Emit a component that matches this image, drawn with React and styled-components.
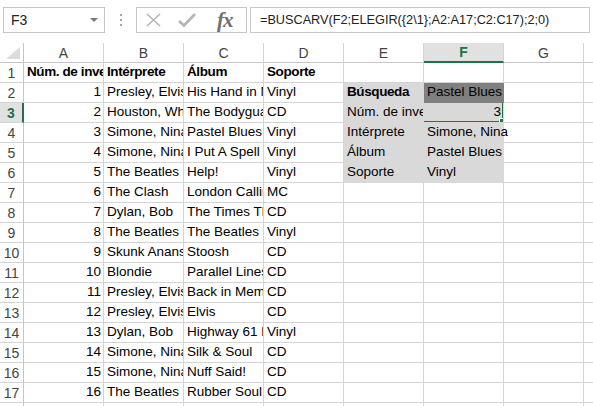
import React from 'react';
import styled, { createGlobalStyle } from 'styled-components';

const GlobalStyle = createGlobalStyle`
    html, body {
        margin:0;
        padding:0;
        background:#fff;
        font-family:"Liberation Sans", Arial, sans-serif;
    }
`;

const GRID = '#d4d4d4';
const GREEN = '#217346';
const FILL = '#d9d9d9';
const DARK = '#808080';

const Page = styled.div`
    width:593px;
    height:406px;
    overflow:hidden;
    display:flex;
    flex-direction:column;
`;

const Toolbar = styled.div`
    height:43px;
    flex-shrink:0;
    box-sizing:border-box;
    padding:7px 3px 0 3px;
    display:flex;
    align-items:flex-start;
`;

const NameBox = styled.div`
    width:102px;
    height:26px;
    box-sizing:border-box;
    border:1px solid #c6c6c6;
    display:flex;
    align-items:center;
    justify-content:space-between;
    padding:0 6px 0 7px;
    font-size:14px;
    color:#222;
`;

const Arrow = styled.span`
    width:0;
    height:0;
    border-left:4px solid transparent;
    border-right:4px solid transparent;
    border-top:4px solid #7a7a7a;
`;

const Dots = styled.div`
    width:31px;
    height:26px;
    display:flex;
    flex-direction:column;
    align-items:center;
    justify-content:center;
    gap:3px;
    span{
        width:2px;
        height:2px;
        background:#a6a6a6;
    }
`;

const Buttons = styled.div`
    width:111px;
    height:26px;
    box-sizing:border-box;
    border:1px solid #c6c6c6;
    display:flex;
    align-items:center;
    padding:0 0 0 9px;
    gap:17px;
`;

const Fx = styled.span`
    font-family:"Liberation Serif", "Times New Roman", serif;
    font-style:italic;
    font-weight:bold;
    font-size:21px;
    color:#6e6e6e;
    letter-spacing:-1px;
    margin-left:4px;
    line-height:22px;
`;

const Formula = styled.div`
    flex:1;
    margin-left:3px;
    height:26px;
    box-sizing:border-box;
    border:1px solid #c6c6c6;
    display:flex;
    align-items:center;
    padding-left:9px;
    font-size:12.7px;
    color:#222;
    white-space:nowrap;
    overflow:hidden;
`;

const Sheet = styled.div`
    display:grid;
    grid-template-columns:24px repeat(8, 80px);
    grid-auto-rows:20px;
    font-size:13.5px;
`;

const Corner = styled.div`
    box-sizing:border-box;
    border-right:1px solid #c6c6c6;
    border-bottom:1px solid #c6c6c6;
    display:flex;
    align-items:flex-end;
    justify-content:flex-end;
    padding:0 3px 3px 0;
    &::after{
        content:'';
        width:0;
        height:0;
        border-left:14px solid transparent;
        border-bottom:12px solid #dcdcdc;
    }
`;

const ColHead = styled.div`
    box-sizing:border-box;
    border-right:1px solid ${GRID};
    border-bottom:${p => p.$active ? `2px solid ${GREEN}` : '1px solid #c6c6c6'};
    background:${p => p.$active ? '#e1e1e1' : '#fff'};
    color:${p => p.$active ? GREEN : '#444'};
    font-weight:${p => p.$active ? 'bold' : 'normal'};
    display:flex;
    align-items:center;
    justify-content:center;
    font-size:14px;
`;

const RowHead = styled.div`
    box-sizing:border-box;
    border-right:${p => p.$active ? `2px solid ${GREEN}` : '1px solid #c6c6c6'};
    border-bottom:1px solid ${GRID};
    background:${p => p.$active ? '#e1e1e1' : '#fff'};
    color:${p => p.$active ? GREEN : '#444'};
    font-weight:${p => p.$active ? 'bold' : 'normal'};
    display:flex;
    align-items:center;
    justify-content:center;
    font-size:14px;
`;

const Cell = styled.div`
    position:relative;
    box-sizing:border-box;
    border-right:1px solid ${p => p.$fill || GRID};
    border-bottom:1px solid ${p => p.$fill || GRID};
    background:${p => p.$fill || 'transparent'};
    overflow:${p => p.$spill ? 'visible' : 'hidden'};
    z-index:${p => p.$spill ? 1 : 0};
    white-space:nowrap;
    display:flex;
    align-items:flex-end;
    justify-content:${p => p.$num ? 'flex-end' : 'flex-start'};
    padding:0 ${p => p.$num ? '2px' : '0'} 2px ${p => p.$num ? '0' : '3px'};
    line-height:16px;
    font-weight:${p => p.$bold ? 'bold' : 'normal'};
    letter-spacing:${p => p.$bold ? '-0.4px' : '0'};
    color:#000;
`;

const Selection = styled.div`
    position:absolute;
    left:-2px;
    top:-2px;
    right:-1px;
    bottom:-1px;
    border:2px solid ${GREEN};
    pointer-events:none;
    &::after{
        content:'';
        position:absolute;
        right:-4px;
        bottom:-4px;
        width:5px;
        height:5px;
        background:${GREEN};
        border:1px solid #fff;
    }
`;

const data = [
    [1, 'Presley, Elvis', 'His Hand in Mine', 'Vinyl'],
    [2, 'Houston, Whitney', 'The Bodyguard', 'CD'],
    [3, 'Simone, Nina', 'Pastel Blues', 'Vinyl'],
    [4, 'Simone, Nina', 'I Put A Spell on You', 'Vinyl'],
    [5, 'The Beatles', 'Help!', 'Vinyl'],
    [6, 'The Clash', 'London Calling', 'MC'],
    [7, 'Dylan, Bob', 'The Times They Are a-Changin\'', 'CD'],
    [8, 'The Beatles', 'The Beatles', 'Vinyl'],
    [9, 'Skunk Anansie', 'Stoosh', 'CD'],
    [10, 'Blondie', 'Parallel Lines', 'CD'],
    [11, 'Presley, Elvis', 'Back in Memphis', 'CD'],
    [12, 'Presley, Elvis', 'Elvis', 'CD'],
    [13, 'Dylan, Bob', 'Highway 61 Revisited', 'Vinyl'],
    [14, 'Simone, Nina', 'Silk & Soul', 'CD'],
    [15, 'Simone, Nina', 'Nuff Said!', 'CD'],
    [16, 'The Beatles', 'Rubber Soul', 'CD'],
];

const lookup = {
    2: [{ v: 'Búsqueda', bold: true }, { v: 'Pastel Blues', dark: true }],
    3: [{ v: 'Núm. de inventario' }, { v: 3, num: true, selected: true }],
    4: [{ v: 'Intérprete' }, { v: 'Simone, Nina' }],
    5: [{ v: 'Álbum' }, { v: 'Pastel Blues' }],
    6: [{ v: 'Soporte' }, { v: 'Vinyl' }],
};

const cols = ['A', 'B', 'C', 'D', 'E', 'F', 'G', 'H'];

function buildRow(r) {
    const cells = Array(8).fill(null);
    if (r === 1) {
        ['Núm. de inventario', 'Intérprete', 'Álbum', 'Soporte'].forEach((v, i) => {
            cells[i] = { v, bold: true };
        });
    } else if (r <= 17) {
        const [n, artist, album, media] = data[r - 2];
        cells[0] = { v: n, num: true };
        cells[1] = { v: artist };
        cells[2] = { v: album };
        cells[3] = { v: media };
    }
    if (lookup[r]) {
        cells[4] = { ...lookup[r][0], fill: FILL };
        cells[5] = { ...lookup[r][1], fill: lookup[r][1].dark ? DARK : FILL };
    }
    return cells;
}

export default function App() {
    return (
        <Page>
            <GlobalStyle />
            <Toolbar>
                <NameBox>F3<Arrow /></NameBox>
                <Dots><span /><span /><span /></Dots>
                <Buttons>
                    <svg width="15" height="14" viewBox="0 0 15 14">
                        <path d="M1 1 L14 13 M14 1 L1 13" stroke="#b4b4b4" strokeWidth="1.6" fill="none" />
                    </svg>
                    <svg width="18" height="14" viewBox="0 0 18 14">
                        <path d="M1 8 L6 12.5 L17 1" stroke="#b4b4b4" strokeWidth="2.6" fill="none" />
                    </svg>
                    <Fx>fx</Fx>
                </Buttons>
                <Formula>=BUSCARV(F2;ELEGIR({'{'}2\1{'}'};A2:A17;C2:C17);2;0)</Formula>
            </Toolbar>
            <Sheet>
                <Corner />
                {cols.map(c => <ColHead key={c} $active={c === 'F'}>{c}</ColHead>)}
                {Array.from({ length: 18 }, (_, i) => i + 1).map(r => {
                    const cells = buildRow(r);
                    return (
                        <React.Fragment key={r}>
                            <RowHead $active={r === 3}>{r}</RowHead>
                            {cells.map((c, i) => {
                                const spill = c && !c.num && !cells[i + 1];
                                return (
                                    <Cell
                                        key={i}
                                        $fill={c && c.fill}
                                        $num={c && c.num}
                                        $bold={c && c.bold}
                                        $spill={spill}
                                    >
                                        {c ? c.v : ''}
                                        {c && c.selected && <Selection />}
                                    </Cell>
                                );
                            })}
                        </React.Fragment>
                    );
                })}
            </Sheet>
        </Page>
    );
}
